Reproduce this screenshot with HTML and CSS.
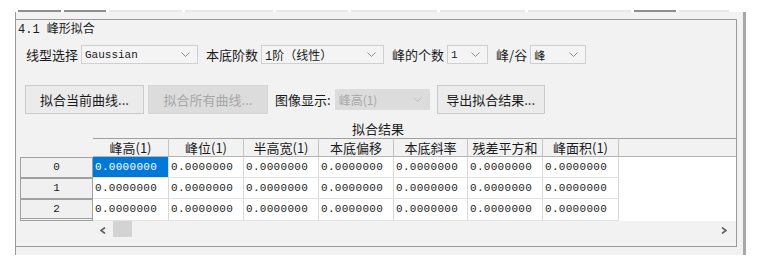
FILE: index.html
```html
<!DOCTYPE html>
<html lang="zh-CN">
<head>
    <meta charset="UTF-8">
    <title>峰形拟合</title>
    <link rel="stylesheet" href="styles.css">
</head>
<body>
    <div class="tabs">
        <span class="dark"></span><span class="dark"></span><span></span><span></span><span></span>
        <span></span><span></span><span></span><span class="dark"></span><span></span>
    </div>

    <div class="panel">
        <div class="group">
            <div class="title">4.1 峰形拟合</div>

            <div class="row params">
                <label>线型选择</label>
                <div class="select sel-type"><span class="val">Gaussian</span><svg width="9" height="5"><polyline points="0.5,0.5 4.5,4.5 8.5,0.5"/></svg></div>
                <label>本底阶数</label>
                <div class="select sel-order"><span class="val">1阶（线性）</span><svg width="9" height="5"><polyline points="0.5,0.5 4.5,4.5 8.5,0.5"/></svg></div>
                <label>峰的个数</label>
                <div class="select sel-count"><span class="val">1</span><svg width="9" height="5"><polyline points="0.5,0.5 4.5,4.5 8.5,0.5"/></svg></div>
                <label>峰/谷</label>
                <div class="select sel-peak"><span class="val">峰</span><svg width="9" height="5"><polyline points="0.5,0.5 4.5,4.5 8.5,0.5"/></svg></div>
            </div>

            <div class="row actions">
                <button class="btn btn-cur">拟合当前曲线...</button>
                <button class="btn btn-all" disabled>拟合所有曲线...</button>
                <label class="img-label">图像显示:</label>
                <div class="select disabled sel-img"><span class="val">峰高(1)</span><svg width="9" height="5"><polyline points="0.5,0.5 4.5,4.5 8.5,0.5"/></svg></div>
                <button class="btn btn-export">导出拟合结果...</button>
            </div>

            <div class="result-title">拟合结果</div>

            <div class="grid">
                <div class="corner"></div>
                <div class="hd">峰高(1)</div>
                <div class="hd">峰位(1)</div>
                <div class="hd">半高宽(1)</div>
                <div class="hd">本底偏移</div>
                <div class="hd">本底斜率</div>
                <div class="hd">残差平方和</div>
                <div class="hd">峰面积(1)</div>
                <div class="hd-fill"></div>

                <div class="rh">0</div>
                <div class="cell selected">0.0000000</div>
                <div class="cell">0.0000000</div>
                <div class="cell">0.0000000</div>
                <div class="cell">0.0000000</div>
                <div class="cell">0.0000000</div>
                <div class="cell">0.0000000</div>
                <div class="cell">0.0000000</div>
                <div class="fill"></div>

                <div class="rh">1</div>
                <div class="cell">0.0000000</div>
                <div class="cell">0.0000000</div>
                <div class="cell">0.0000000</div>
                <div class="cell">0.0000000</div>
                <div class="cell">0.0000000</div>
                <div class="cell">0.0000000</div>
                <div class="cell">0.0000000</div>
                <div class="fill"></div>

                <div class="rh last">2</div>
                <div class="cell">0.0000000</div>
                <div class="cell">0.0000000</div>
                <div class="cell">0.0000000</div>
                <div class="cell">0.0000000</div>
                <div class="cell">0.0000000</div>
                <div class="cell">0.0000000</div>
                <div class="cell">0.0000000</div>
                <div class="fill"></div>

                <div class="sb-corner"></div>
                <div class="scrollbar">
                    <span class="arrow"><svg width="6" height="7"><polyline points="5,0.5 1,3.5 5,6.5"/></svg></span>
                    <span class="thumb"></span>
                    <span class="arrow right"><svg width="6" height="7"><polyline points="1,0.5 5,3.5 1,6.5"/></svg></span>
                </div>
            </div>
        </div>
    </div>
</body>
</html>
```

FILE: styles.css
```css
body {
    margin: 0;
    background: #fff;
    font-family: "Noto Sans CJK SC", sans-serif;
    font-size: 13px;
    color: #1a1a1a;
}
.tabs {
    display: flex;
    align-items: flex-end;
    gap: 3px;
    height: 12px;
    padding-left: 18px;
}
.tabs span {
    height: 2px;
    background: #e8e8e8;
}
.tabs .dark { background: #8e8e8e; }
.tabs span:nth-child(1) { width: 43px; }
.tabs span:nth-child(2) { width: 42px; }
.tabs span:nth-child(3) { width: 73px; }
.tabs span:nth-child(4) { width: 88px; }
.tabs span:nth-child(5) { width: 72px; }
.tabs span:nth-child(6) { width: 86px; }
.tabs span:nth-child(7) { width: 85px; }
.tabs span:nth-child(8) { width: 103px; }
.tabs span:nth-child(9) { width: 42px; }
.tabs span:nth-child(10) { width: 50px; }

.panel {
    margin-left: 15px;
    width: 731px;
    height: 243px;
    padding-top: 7px;
    box-sizing: border-box;
    border-left: 1px solid #9a9a9a;
    border-right: 3px solid #a8a8a8;
    background: #f2f2f2;
}
.group {
    width: 721px;
    height: 228px;
    box-sizing: border-box;
    border: 1px solid #9a9a9a;
    border-left: none;
}
.title {
    margin-top: 1px;
    padding-left: 2px;
    height: 18px;
    line-height: 18px;
    font-family: "Liberation Mono", "Noto Sans CJK SC", monospace;
    font-size: 12px;
}
.row {
    display: flex;
    align-items: center;
}
.params {
    margin-top: 6px;
    padding-left: 10px;
    height: 19px;
}
.params label { margin-right: 3px; }
.select {
    display: flex;
    align-items: center;
    justify-content: space-between;
    height: 19px;
    padding: 0 7px 0 3px;
    box-sizing: border-box;
    border: 1px solid #cfcfcf;
    background: #f4f4f4;
    font-family: "Liberation Mono", "Noto Sans CJK SC", monospace;
    font-size: 11px;
    margin-right: 8px;
}
.select svg polyline {
    fill: none;
    stroke: #8a8a8a;
    stroke-width: 1;
}
.sel-type { width: 117px; }
.sel-order { width: 123px; }
.sel-count { width: 41px; }
.sel-peak { width: 56px; }
.sel-order .val { font-size: 12px; }

.actions {
    margin-top: 21px;
    padding-left: 9px;
    height: 29px;
}
.btn {
    height: 29px;
    margin: 0 4px 0 0;
    padding: 0;
    border: 1px solid #cacaca;
    background: #ebebeb;
    font-family: "Noto Sans CJK SC", sans-serif;
    font-size: 13px;
    color: #1a1a1a;
}
.btn-cur { width: 119px; }
.btn-all {
    width: 120px;
    margin-right: 7px;
    background: #dcdcdc;
    border-color: #d6d6d6;
    color: #a6a6a6;
}
.btn-export { width: 108px; }
.img-label { margin-right: 4px; }
.select.disabled {
    width: 95px;
    height: 21px;
    margin-right: 7px;
    border-color: #dcdcdc;
    background: #dcdcdc;
    color: #a8a8a8;
    font-family: "Noto Sans CJK SC", sans-serif;
    font-size: 12px;
}
.select.disabled svg polyline { stroke: #bdbdbd; }

.result-title {
    margin-top: 7px;
    height: 17px;
    line-height: 16px;
    padding-left: 4px;
    width: 716px;
    text-align: center;
}

.grid {
    display: grid;
    grid-template-columns: 73px 76px 75px 75px 75px 74px 75px 76px 1fr;
    grid-template-rows: 19px 21px 21px 22px 18px;
    margin-left: 4px;
    width: 716px;
}
.hd, .hd-fill {
    border-top: 1px solid #a0a0a0;
    border-bottom: 1px solid #b4b4b4;
}
.hd {
    border-right: 1px solid #c4c4c4;
    text-align: center;
    line-height: 17px;
    font-size: 13px;
}
.rh {
    background: #f0f0f0;
    border: 1px solid #a0a0a0;
    text-align: center;
    line-height: 19px;
    font-family: "Liberation Mono", monospace;
    font-size: 11px;
}
.rh.last { border-bottom: 3px double #a0a0a0; }
.cell {
    background: #fff;
    border-right: 1px solid #d8d8d8;
    border-bottom: 1px solid #e2e2e2;
    padding-left: 2px;
    line-height: 20px;
    font-family: "Liberation Mono", monospace;
    font-size: 11px;
    letter-spacing: 0.3px;
    color: #222;
}
.cell.selected {
    background: #0078d7;
    color: #fff;
}
.fill { background: #fff; }

.scrollbar {
    grid-column: 2 / -1;
    display: flex;
    align-items: center;
}
.arrow {
    width: 20px;
    display: flex;
    justify-content: center;
}
.arrow svg polyline {
    fill: none;
    stroke: #606060;
    stroke-width: 1.6;
}
.thumb {
    width: 19px;
    height: 16px;
    margin-top: -2px;
    background: #d3d3d3;
}
.arrow.right {
    margin-left: auto;
    margin-right: 2px;
}
```
